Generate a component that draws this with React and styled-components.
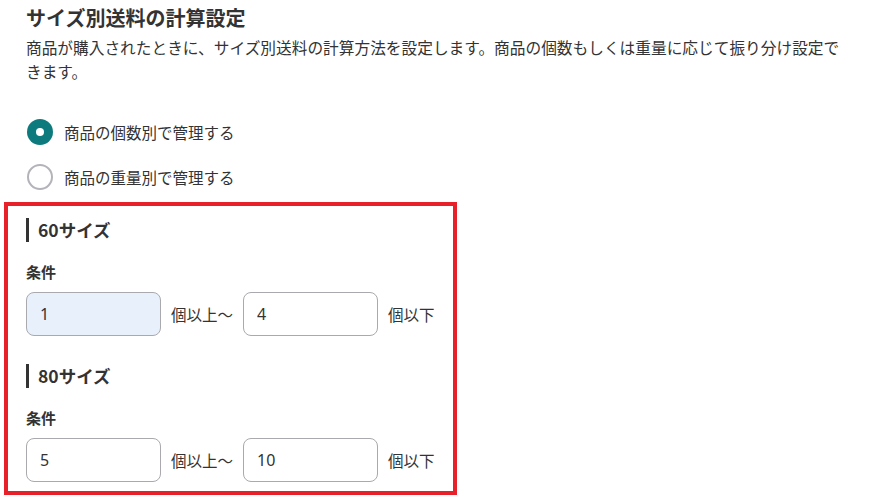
import React from "react";
import styled, { createGlobalStyle } from "styled-components";

const Global = createGlobalStyle`
  html, body { margin: 0; padding: 0; background: #fff; }
  body {
    font-family: "Noto Sans CJK JP", "Noto Sans", sans-serif;
    color: #333;
  }
  * { box-sizing: border-box; }
`;

const Page = styled.div`
  width: 884px;
  height: 500px;
  padding: 5px 0 0 4px;
  overflow: hidden;
`;

const Intro = styled.div`
  padding: 0 0 0 22px;
`;

const Title = styled.h2`
  margin: 0;
  font-size: 20px;
  line-height: 26px;
  font-weight: 700;
  color: #333;
`;

const Description = styled.p`
  margin: 5px 0 0;
  max-width: 822px;
  font-size: 15.7px;
  line-height: 24px;
  color: #333;
`;

const RadioGroup = styled.div`
  display: flex;
  flex-direction: column;
  gap: 19px;
  margin-top: 35px;
  padding-left: 1px;
`;

const RadioRow = styled.label`
  display: flex;
  align-items: center;
  gap: 11px;
  height: 26px;
  font-size: 15.5px;
  color: #333;
`;

const RadioCircle = styled.span`
  width: 26px;
  height: 26px;
  border-radius: 50%;
  flex: none;
  ${(p) =>
    p.$checked
      ? `background: #0d7b7e; display:flex; align-items:center; justify-content:center;
         &::after { content: ""; width: 8px; height: 8px; border-radius: 50%; background: #fff; }`
      : `border: 2px solid #b3b3ba; background: #fff;`}
`;

const SizeBox = styled.div`
  margin-top: 12px;
  width: 453px;
  border: 4px solid #e8202a;
  padding: 12px 0 9px 18px;
  display: flex;
  flex-direction: column;
`;

const SizeSection = styled.section`
  display: flex;
  flex-direction: column;
  & + & {
    margin-top: 28px;
  }
`;

const SizeHeading = styled.h3`
  margin: 0;
  height: 24px;
  border-left: 3px solid #333;
  padding-left: 9px;
  font-size: 17.5px;
  line-height: 24px;
  font-weight: 700;
  color: #333;
`;

const ConditionLabel = styled.div`
  margin-top: 20px;
  font-size: 15px;
  line-height: 20px;
  font-weight: 700;
  color: #333;
`;

const RangeRow = styled.div`
  margin-top: 10px;
  display: flex;
  align-items: center;
  gap: 10px;
`;

const NumberInput = styled.input`
  width: 135px;
  height: 44px;
  border: 1px solid #a9a9ae;
  border-radius: 8px;
  padding: 0 13px;
  font-family: "Noto Sans", "Noto Sans CJK JP", sans-serif;
  font-size: 16px;
  color: #333;
  background: ${(p) => (p.$filled ? "#e8f0fc" : "#fff")};
  outline: none;
`;

const Unit = styled.span`
  font-size: 15.5px;
  color: #333;
  white-space: nowrap;
`;

const sizes = [
  { name: "60サイズ", min: "1", max: "4", filled: true },
  { name: "80サイズ", min: "5", max: "10" },
];

export default function App() {
  return (
    <>
      <Global />
      <Page>
        <Intro>
          <Title>サイズ別送料の計算設定</Title>
          <Description>
            商品が購入されたときに、サイズ別送料の計算方法を設定します。商品の個数もしくは重量に応じて振り分け設定できます。
          </Description>
          <RadioGroup>
            <RadioRow>
              <RadioCircle $checked />
              商品の個数別で管理する
            </RadioRow>
            <RadioRow>
              <RadioCircle />
              商品の重量別で管理する
            </RadioRow>
          </RadioGroup>
        </Intro>
        <SizeBox>
          {sizes.map((s) => (
            <SizeSection key={s.name}>
              <SizeHeading>{s.name}</SizeHeading>
              <ConditionLabel>条件</ConditionLabel>
              <RangeRow>
                <NumberInput $filled={s.filled} defaultValue={s.min} />
                <Unit>個以上～</Unit>
                <NumberInput defaultValue={s.max} />
                <Unit>個以下</Unit>
              </RangeRow>
            </SizeSection>
          ))}
        </SizeBox>
      </Page>
    </>
  );
}
